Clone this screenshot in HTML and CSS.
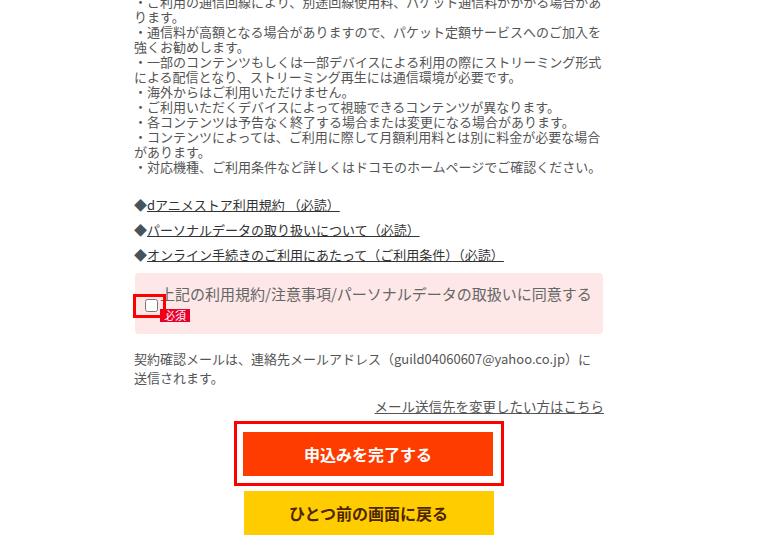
FILE: index.html
```html
<html>
<head>
  <meta charset="utf-8">
  <link rel="stylesheet" href="styles.css">
</head>
<body>
<div class="page">
  <p class="notes">
    ・ご利用の通信回線により、別途回線使用料、パケット通信料がかかる場合があります。<br>
    ・通信料が高額となる場合がありますので、パケット定額サービスへのご加入を強くお勧めします。<br>
    ・一部のコンテンツもしくは一部デバイスによる利用の際にストリーミング形式による配信となり、ストリーミング再生には通信環境が必要です。<br>
    ・海外からはご利用いただけません。<br>
    ・ご利用いただくデバイスによって視聴できるコンテンツが異なります。<br>
    ・各コンテンツは予告なく終了する場合または変更になる場合があります。<br>
    ・コンテンツによっては、ご利用に際して月額利用料とは別に料金が必要な場合があります。<br>
    ・対応機種、ご利用条件など詳しくはドコモのホームページでご確認ください。
  </p>

  <ul class="links">
    <li><span class="mark">◆</span><a href="#">dアニメストア利用規約 （必読）</a></li>
    <li><span class="mark">◆</span><a href="#">パーソナルデータの取り扱いについて（必読）</a></li>
    <li><span class="mark">◆</span><a href="#">オンライン手続きのご利用にあたって（ご利用条件）（必読）</a></li>
  </ul>

  <div class="agree">
    <span class="check-wrap"><input type="checkbox" id="agree"></span>
    <label class="agree-text" for="agree">
      <span class="agree-line">上記の利用規約/注意事項/パーソナルデータの取扱いに同意する</span>
      <span class="required">必須</span>
    </label>
  </div>

  <p class="mail-note">契約確認メールは、連絡先メールアドレス（guild04060607@yahoo.co.jp）に<br>送信されます。</p>
  <p class="mail-change"><a href="#">メール送信先を変更したい方はこちら</a></p>

  <div class="buttons">
    <div class="submit-frame">
      <button class="btn btn-submit" type="button">申込みを完了する</button>
    </div>
    <button class="btn btn-back" type="button">ひとつ前の画面に戻る</button>
  </div>
</div>
</body>
</html>
```

FILE: styles.css
```css
body{
    margin: 0;
    background: #fff;
    font-family: "Noto Sans CJK JP", "Noto Sans", sans-serif;
    color: #555;
}
.page{
    width: 470px;
    margin: -6px 0 0 134px;
}
.notes{
    margin: 0;
    font-size: 13px;
    line-height: 15px;
    color: #555;
}
.links{
    list-style: none;
    margin: 18px 0 0 0;
    padding: 0;
}
.links li{
    font-size: 13px;
    line-height: 25px;
    height: 25px;
}
.mark{
    color: #47535c;
}
.links a{
    color: #333;
    text-decoration: underline;
}
.agree{
    display: flex;
    align-items: flex-start;
    margin: 6px 1px 0 1px;
    padding: 11px 0 12px 0;
    background: #fde7e7;
    border-radius: 4px;
}
.check-wrap{
    display: flex;
    flex: none;
    margin: 10px -6px 0 -2px;
    padding: 2px 5px 3px 9px;
    border: 3px solid #f00;
    position: relative;
    z-index: 1;
}
.check-wrap input{
    margin: 0;
    width: 13px;
    height: 13px;
}
.agree-text{
    display: flex;
    flex-direction: column;
    align-items: flex-start;
    font-size: 15px;
    line-height: 20px;
    color: #666;
    white-space: nowrap;
}
.required{
    display: block;
    margin-top: 5px;
    padding: 0 4px;
    height: 13px;
    line-height: 13px;
    font-size: 11px;
    color: #fff;
    background: #e8002d;
}
.mail-note{
    margin: 15px 0 0 0;
    font-size: 13px;
    line-height: 19px;
    color: #555;
}
.mail-change{
    margin: 10px 0 0 0;
    text-align: right;
    font-size: 13.5px;
    line-height: 19px;
}
.mail-change a{
    color: #555;
}
.buttons{
    display: flex;
    flex-direction: column;
    align-items: center;
    margin-top: 5px;
}
.submit-frame{
    border: 3px solid #f00;
    padding: 8px 8px 7px 6px;
}
.btn{
    display: block;
    width: 250px;
    height: 44px;
    border: none;
    font-family: "Noto Sans CJK JP", sans-serif;
    font-size: 16px;
    font-weight: bold;
}
.btn-submit{
    background: #ff3c00;
    color: #fff;
}
.btn-back{
    margin: 5px 0 0 -1px;
    background: #ffcc00;
    color: #4d2600;
}
```
